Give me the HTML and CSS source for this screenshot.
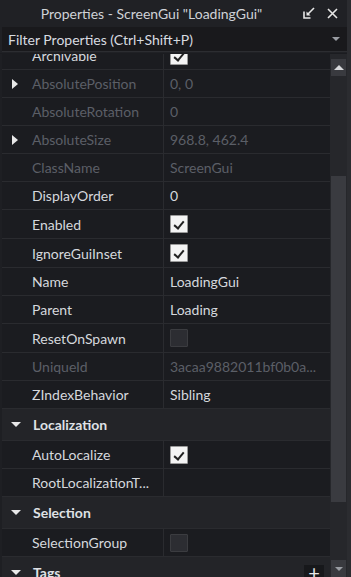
FILE: index.html
```html
<!DOCTYPE html>
<html lang="en">
<head>
    <meta charset="UTF-8">
    <meta name="viewport" content="width=device-width, initial-scale=1.0">
    <title>Properties</title>
    <link rel="stylesheet" href="styles.css">
</head>
<body>
    <div class="window">
        <div class="panel">
            <div class="titlebar">
                <div class="title">Properties - ScreenGui "LoadingGui"</div>
                <div class="title-buttons">
                    <svg class="undock" width="12" height="12" viewBox="0 0 12 12">
                        <path d="M1 4.5V11H7.5" fill="none" stroke="#e6e6e6" stroke-width="1.6"/>
                        <path d="M11 1L5 7" stroke="#e6e6e6" stroke-width="1.6"/>
                        <path d="M3.5 4.5V8.5H7.5Z" fill="#e6e6e6"/>
                    </svg>
                    <svg class="close" width="11" height="11" viewBox="0 0 11 11">
                        <path d="M1 1L10 10M10 1L1 10" stroke="#e6e6e6" stroke-width="1.6"/>
                    </svg>
                </div>
            </div>

            <div class="filter">
                <div class="filter-box">
                    <span>Filter Properties (Ctrl+Shift+P)</span>
                    <span class="tri-down small"></span>
                </div>
            </div>

            <div class="list">
                <div class="rows">
                    <div class="row first">
                        <div class="name"><span>Archivable</span></div>
                        <div class="value"><span class="check on"></span></div>
                    </div>
                    <div class="row">
                        <div class="name disabled"><span class="tri-right"></span><span>AbsolutePosition</span></div>
                        <div class="value disabled">0, 0</div>
                    </div>
                    <div class="row">
                        <div class="name disabled"><span>AbsoluteRotation</span></div>
                        <div class="value disabled">0</div>
                    </div>
                    <div class="row">
                        <div class="name disabled"><span class="tri-right"></span><span>AbsoluteSize</span></div>
                        <div class="value disabled">968.8, 462.4</div>
                    </div>
                    <div class="row">
                        <div class="name disabled"><span>ClassName</span></div>
                        <div class="value disabled">ScreenGui</div>
                    </div>
                    <div class="row">
                        <div class="name"><span>DisplayOrder</span></div>
                        <div class="value">0</div>
                    </div>
                    <div class="row tall">
                        <div class="name"><span>Enabled</span></div>
                        <div class="value"><span class="check on"></span></div>
                    </div>
                    <div class="row tall">
                        <div class="name"><span>IgnoreGuiInset</span></div>
                        <div class="value"><span class="check on"></span></div>
                    </div>
                    <div class="row">
                        <div class="name"><span>Name</span></div>
                        <div class="value">LoadingGui</div>
                    </div>
                    <div class="row">
                        <div class="name"><span>Parent</span></div>
                        <div class="value">Loading</div>
                    </div>
                    <div class="row tall">
                        <div class="name"><span>ResetOnSpawn</span></div>
                        <div class="value"><span class="check"></span></div>
                    </div>
                    <div class="row">
                        <div class="name disabled"><span>UniqueId</span></div>
                        <div class="value disabled">3acaa9882011bf0b0a...</div>
                    </div>
                    <div class="row">
                        <div class="name"><span>ZIndexBehavior</span></div>
                        <div class="value">Sibling</div>
                    </div>

                    <div class="group"><span class="tri-down"></span><span>Localization</span></div>
                    <div class="row">
                        <div class="name"><span>AutoLocalize</span></div>
                        <div class="value"><span class="check on"></span></div>
                    </div>
                    <div class="row">
                        <div class="name"><span>RootLocalizationT...</span></div>
                        <div class="value"></div>
                    </div>

                    <div class="group"><span class="tri-down"></span><span>Selection</span></div>
                    <div class="row">
                        <div class="name"><span>SelectionGroup</span></div>
                        <div class="value"><span class="check"></span></div>
                    </div>

                    <div class="group"><span class="tri-down"></span><span>Tags</span></div>
                </div>

                <div class="scrollbar">
                    <div class="scroll-btn"><span class="tri-up"></span></div>
                    <div class="track">
                        <div class="thumb"></div>
                    </div>
                    <div class="scroll-btn"><span class="tri-down small"></span></div>
                </div>

                <div class="add-btn">+</div>
            </div>
        </div>
        <div class="edge"></div>
    </div>
</body>
</html>
```

FILE: styles.css
```css
body {
    margin: 0;
    background-color: #1b1c20;
    font-family: Lato, "Liberation Sans", sans-serif;
    font-size: 14px;
    color: #d5d8dd;
    overflow: hidden;
}

.window {
    display: flex;
    height: 577px;
}

.panel {
    flex: 1;
    display: flex;
    flex-direction: column;
    min-width: 0;
}

.edge {
    width: 4px;
    background-color: #2b2c30;
}

/* title bar */
.titlebar {
    height: 26px;
    display: flex;
    align-items: center;
    background-color: #202125;
    position: relative;
}

.title {
    flex: 1;
    text-align: center;
    padding-left: 4px;
    padding-right: 48px;
    color: #cfd2d7;
    font-size: 14px;
}

.title-buttons {
    position: absolute;
    right: 9px;
    top: 7px;
    display: flex;
    gap: 12px;
    align-items: center;
}

/* filter */
.filter {
    padding: 1px 0 1px 2px;
    background-color: #202125;
}

.filter-box {
    height: 24px;
    display: flex;
    align-items: center;
    justify-content: space-between;
    padding: 0 7px 0 6px;
    background-color: #19191c;
    border-bottom: 1px solid #2c2d31;
    color: #d8dbe0;
}

/* triangles */
.tri-down {
    width: 0;
    height: 0;
    border-left: 5px solid transparent;
    border-right: 5px solid transparent;
    border-top: 5px solid #e8e8e8;
}

.tri-down.small {
    border-left-width: 4px;
    border-right-width: 4px;
    border-top-width: 4px;
    border-top-color: #9a9da3;
}

.tri-right {
    position: absolute;
    left: 10px;
    top: 9px;
    width: 0;
    height: 0;
    border-top: 5px solid transparent;
    border-bottom: 5px solid transparent;
    border-left: 6px solid #e8e8e8;
}

.tri-up {
    width: 0;
    height: 0;
    border-left: 5px solid transparent;
    border-right: 5px solid transparent;
    border-bottom: 5px solid #d8d9dc;
}

/* property list */
.list {
    flex: 1;
    display: flex;
    margin-top: 1px;
    overflow: hidden;
    position: relative;
}

.rows {
    flex: 1;
    padding-left: 2px;
    background-color: #1e1f23;
}

.row {
    height: 27px;
    display: flex;
    border-bottom: 1px solid #2a2b2f;
    background-color: #1b1c20;
}

.row.tall {
    height: 28px;
}

.row.first {
    margin-top: -12px;
}

.name {
    width: 162px;
    position: relative;
    display: flex;
    align-items: center;
    padding-left: 30px;
    box-sizing: border-box;
    border-right: 1px solid #2a2b2f;
    color: #d5d8dd;
}

.value {
    flex: 1;
    display: flex;
    align-items: center;
    padding-left: 6px;
    color: #d5d8dd;
}

.disabled {
    color: #5b5f67;
}

.group {
    height: 31px;
    display: flex;
    align-items: center;
    gap: 12px;
    padding-left: 9px;
    border-bottom: 1px solid #2a2b2f;
    background-color: #232428;
    font-weight: bold;
    color: #dfe1e5;
}

/* checkboxes */
.check {
    width: 16px;
    height: 16px;
    border: 1px solid #3b3c40;
    border-radius: 1px;
    background-color: #2c2d32;
    position: relative;
}

.check.on {
    background-color: #f4f4f4;
    border-color: #9a9a9a;
}

.check.on::after {
    content: "";
    position: absolute;
    left: 5px;
    top: 3px;
    width: 4px;
    height: 8px;
    border-right: 2px solid #222;
    border-bottom: 2px solid #222;
    transform: rotate(40deg);
}

/* scrollbar */
.scrollbar {
    width: 17px;
    display: flex;
    flex-direction: column;
    align-items: center;
    background-color: #26272b;
    padding-top: 5px;
}

.scroll-btn {
    width: 15px;
    height: 17px;
    display: flex;
    align-items: center;
    justify-content: center;
    background-color: #393a3f;
}

.track {
    flex: 1;
    width: 15px;
    padding-top: 100px;
    padding-bottom: 58px;
}

.thumb {
    height: 100%;
    background-color: #3a3b40;
}

.add-btn {
    position: absolute;
    left: 304px;
    bottom: -4px;
    width: 20px;
    height: 16px;
    background-color: #17181b;
    color: #e8e8e8;
    font-size: 20px;
    line-height: 14px;
    text-align: center;
}
```
